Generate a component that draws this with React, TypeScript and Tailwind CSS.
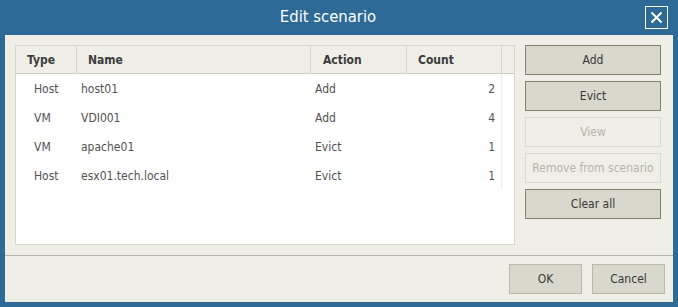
const rows = [
  { type: "Host", name: "host01", action: "Add", count: 2 },
  { type: "VM", name: "VDI001", action: "Add", count: 4 },
  { type: "VM", name: "apache01", action: "Evict", count: 1 },
  { type: "Host", name: "esx01.tech.local", action: "Evict", count: 1 },
]

const SideButton = ({ label, disabled }: { label: string; disabled?: boolean }) => (
  <button
    type="button"
    disabled={disabled}
    className={
      disabled
        ? "h-[30px] w-full border border-[#d9d9cf] bg-[#f0efe7] text-[12px] text-[#b3b3ab]"
        : "h-[30px] w-full border border-[#808072] bg-[#d8d8cc] text-[12px] text-[#383838]"
    }
  >
    {label}
  </button>
)

const App = () => {
  return (
    <div
      className="flex h-[307px] w-[678px] flex-col bg-[#2d6a96]"
      style={{ fontFamily: '"DejaVu Sans Condensed", "DejaVu Sans", sans-serif' }}
    >
      <div className="relative flex h-[35px] items-center justify-center pr-[22px]">
        <span className="text-[16.5px] text-white">Edit scenario</span>
        <button
          type="button"
          className="absolute right-[10px] top-[6px] flex h-[23px] w-[23px] items-center justify-center border-[1.5px] border-white"
        >
          <svg width="13" height="13" viewBox="0 0 13 13">
            <path d="M1.5 1.5 L11.5 11.5 M11.5 1.5 L1.5 11.5" stroke="white" strokeWidth="2" />
          </svg>
        </button>
      </div>

      <div className="mx-[5px] mb-[5px] flex flex-1 flex-col bg-[#f0efe7]">
        <div className="flex gap-[10px] pl-[10px] pr-[12px] pt-[10px]">
          <div className="h-[200px] w-[500px] border border-[#d6d6cb] bg-white">
            <div className="flex h-[28px] border-b border-[#d0d0c6] bg-[#f0efe7] text-[12px] font-bold text-[#3c3c3c]">
              <div className="flex w-[61px] items-center border-r border-[#d6d6cc] pl-[11px]">Type</div>
              <div className="flex w-[234px] items-center border-r border-[#d6d6cc] pl-[11px]">Name</div>
              <div className="flex w-[96px] items-center border-r border-[#d6d6cc] pl-[12px]">Action</div>
              <div className="flex w-[95px] items-center border-r border-[#d6d6cc] pl-[11px]">Count</div>
            </div>
            {rows.map((r) => (
              <div key={r.name} className="flex h-[29px] items-center text-[12px] text-[#525252]">
                <div className="w-[61px] pl-[18px]">{r.type}</div>
                <div className="w-[234px] pl-[4px]">{r.name}</div>
                <div className="w-[96px] pl-[4px]">{r.action}</div>
                <div className="flex h-[27px] w-[95px] items-center justify-end border-r border-[#eeeeea] pr-[6px]">
                  {r.count}
                </div>
              </div>
            ))}
          </div>

          <div className="flex w-[136px] flex-col gap-[6px]">
            <SideButton label="Add" />
            <SideButton label="Evict" />
            <SideButton label="View" disabled />
            <SideButton label="Remove from scenario" disabled />
            <SideButton label="Clear all" />
          </div>
        </div>

        <div className="mt-[10px] h-px bg-[#b5b5ab]" />

        <div className="flex justify-end gap-[10px] pr-[8px] pt-[8px]">
          <button type="button" className="h-[30px] w-[73px] border border-[#b8b8ac] bg-[#d8d8cc] text-[12px] text-[#383838]">
            OK
          </button>
          <button type="button" className="h-[30px] w-[73px] border border-[#b8b8ac] bg-[#d8d8cc] text-[12px] text-[#383838]">
            Cancel
          </button>
        </div>
      </div>
    </div>
  )
}

export default App
